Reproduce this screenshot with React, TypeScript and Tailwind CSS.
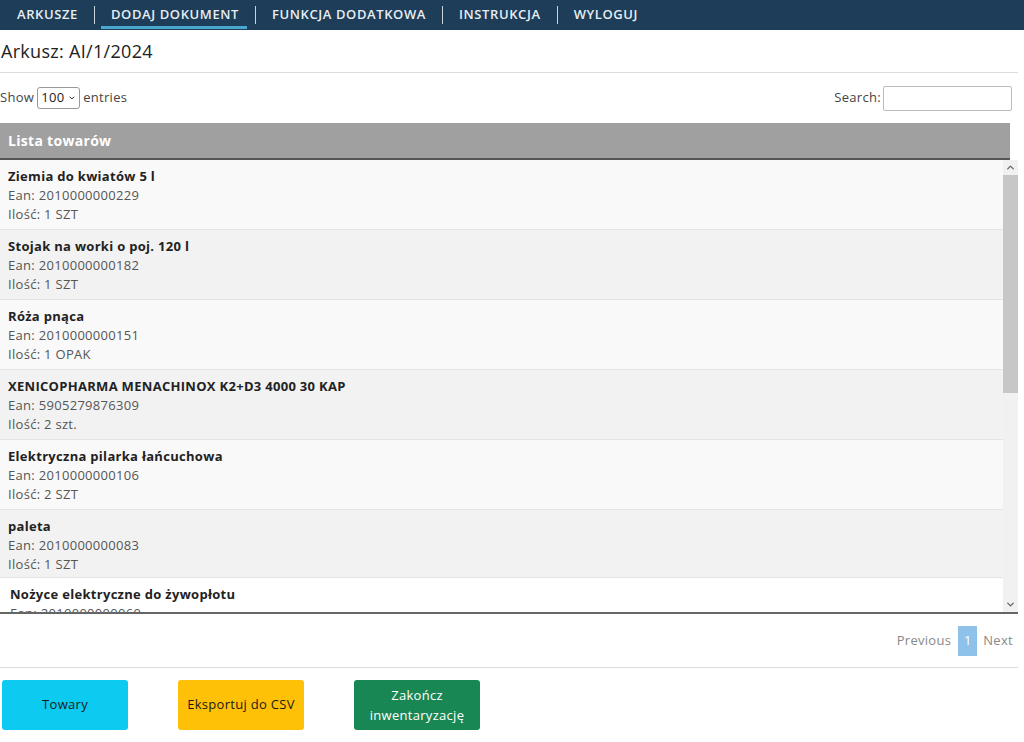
import { ChevronDown, ChevronUp } from "lucide-react";

const items = [
  { name: "Ziemia do kwiatów 5 l", ean: "2010000000229", qty: "1 SZT" },
  { name: "Stojak na worki o poj. 120 l", ean: "2010000000182", qty: "1 SZT" },
  { name: "Róża pnąca", ean: "2010000000151", qty: "1 OPAK" },
  { name: "XENICOPHARMA MENACHINOX K2+D3 4000 30 KAP", ean: "5905279876309", qty: "2 szt." },
  { name: "Elektryczna pilarka łańcuchowa", ean: "2010000000106", qty: "2 SZT" },
  { name: "paleta", ean: "2010000000083", qty: "1 SZT" },
  { name: "Nożyce elektryczne do żywopłotu", ean: "2010000000069", qty: "1 SZT" },
];

const nav = ["ARKUSZE", "DODAJ DOKUMENT", "FUNKCJA DODATKOWA", "INSTRUKCJA", "WYLOGUJ"];

export default function App() {
  return (
    <div className="w-[1024px] h-[742px] overflow-hidden bg-white text-[#333] tracking-[0.3px]" style={{ fontFamily: '"Open Sans", "Noto Sans", sans-serif' }}>
      <nav className="h-[30px] bg-[#1d3d58] flex items-center pl-[17px]">
        {nav.map((n, i) => (
          <div key={n} className="flex items-center">
            {i > 0 && <span className="mx-4 h-[18px] w-px bg-[#c9d3dc]" />}
            <span
              className={`relative text-[13px] font-semibold tracking-[0.6px] text-[#e8edf2] ${
                n === "DODAJ DOKUMENT" ? "after:absolute after:left-[-10px] after:right-[-8px] after:top-[21px] after:h-[3px] after:bg-[#4aa8d0] after:content-['']" : ""
              }`}
            >
              {n}
            </span>
          </div>
        ))}
      </nav>

      <div className="pr-[6px]">
        <h1 className="pl-[1px] pt-[8px] h-[42px] text-[18px] text-[#222]">Arkusz: AI/1/2024</h1>
        <hr className="border-t border-[#dcdcdc]" />

        <div className="flex items-center justify-between h-[50px] pr-[6px] text-[13px] text-[#444]">
          <div className="flex items-center gap-[3px]">
            <span>Show</span>
            <span className="flex items-center gap-1 h-[22px] w-[43px] border border-[#999] rounded-[3px] px-[3px] text-[13px] text-[#222]">
              100 <ChevronDown size={10} strokeWidth={3} />
            </span>
            <span>entries</span>
          </div>
          <div className="flex items-center gap-[2px]">
            <span>Search:</span>
            <span className="h-[25px] w-[129px] border border-[#bbb] rounded-[2px]" />
          </div>
        </div>

        <div className="w-[1010px] h-[37px] bg-[#a0a0a0] border-b-2 border-[#555] flex items-center pl-[8px] text-[14px] font-bold text-white">
          Lista towarów
        </div>

        <div className="flex h-[454px] border-b-2 border-[#666]">
          <div className="w-[1003px] overflow-hidden">
            {items.map((it, i) => (
              <div
                key={it.name}
                className={`border-b border-[#e4e4e4] pt-[7px] text-[13px] leading-[19px] ${
                  i === 6 ? "h-[70px] bg-white pl-[10px] pt-[7px]" : i === 5 ? "h-[68px] bg-[#f2f2f2] pl-[8px]" : i % 2 === 0 ? "h-[70px] bg-[#f9f9f9] pl-[8px]" : "h-[70px] bg-[#f2f2f2] pl-[8px]"
                }`}
              >
                <div className="font-bold text-[#222]">{it.name}</div>
                <div className="text-[#555]">Ean: {it.ean}</div>
                <div className="text-[#555]">Ilość: {it.qty}</div>
              </div>
            ))}
          </div>
          <div className="w-[15px] bg-[#f1f1f1] flex flex-col items-center">
            <ChevronUp size={11} strokeWidth={3} className="text-[#666] my-[2px]" />
            <div className="w-[15px] h-[218px] bg-[#c7c7c7]" />
            <div className="flex-1" />
            <ChevronDown size={11} strokeWidth={3} className="text-[#666] mb-[2px]" />
          </div>
        </div>

        <div className="flex justify-end items-center h-[53px] pr-[5px] text-[13px] text-[#888]">
          <span className="mr-[7px]">Previous</span>
          <span className="w-[19px] h-[30px] bg-[#8ec2ea] text-white flex items-center justify-center">1</span>
          <span className="ml-[6px]">Next</span>
        </div>
        <hr className="border-t border-[#dcdcdc]" />

        <div className="flex gap-[50px] pl-[2px] pt-[12px] text-[13px]">
          <div className="w-[126px] h-[50px] rounded-[3px] bg-[#0dcaf0] flex items-center justify-center text-[#1a1a1a]">Towary</div>
          <div className="w-[126px] h-[50px] rounded-[3px] bg-[#ffc107] flex items-center justify-center text-[#1a1a1a]">Eksportuj do CSV</div>
          <div className="w-[126px] h-[50px] rounded-[3px] bg-[#198754] flex items-center justify-center text-center text-white leading-[20px]">
            Zakończ
            <br />
            inwentaryzację
          </div>
        </div>
      </div>
    </div>
  );
}
